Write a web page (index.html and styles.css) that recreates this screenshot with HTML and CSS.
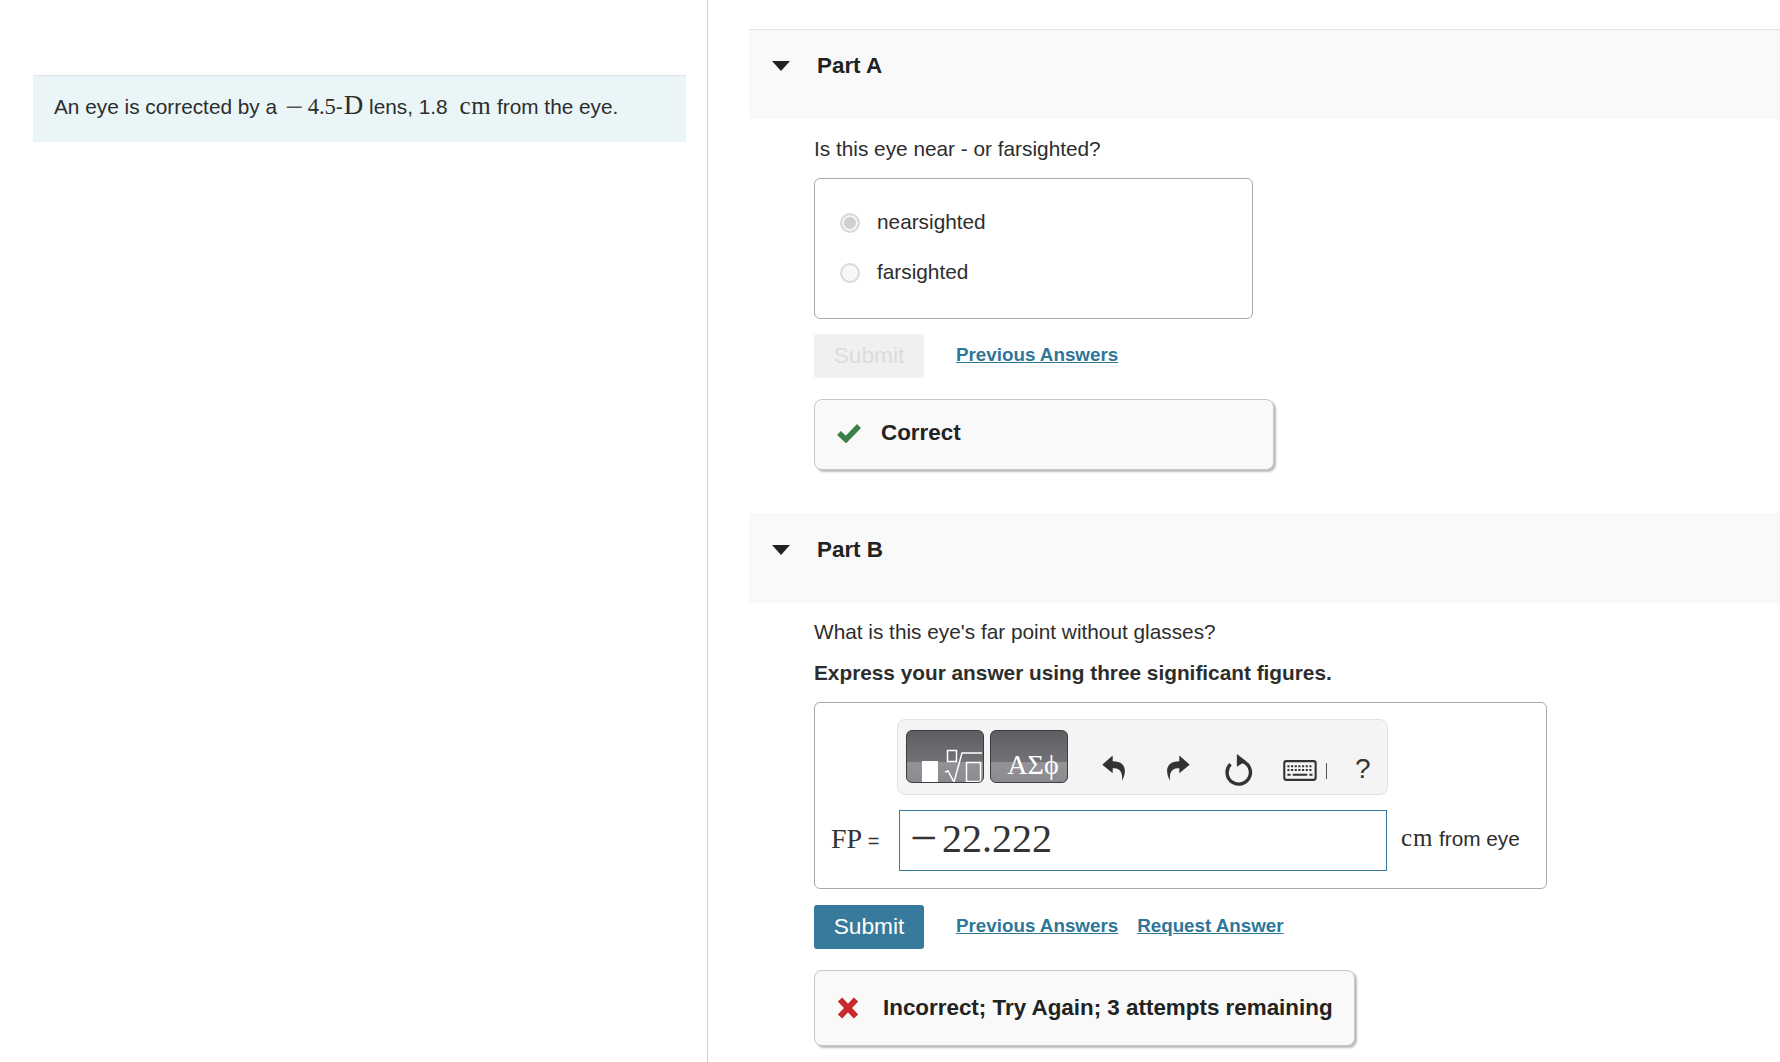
FILE: index.html
```html
<!DOCTYPE html>
<html lang="en">
<head>
<meta charset="utf-8">
<title>Part A and Part B</title>
<link rel="stylesheet" href="styles.css">
</head>
<body>
<div class="page">
  <aside class="left">
    <div class="intro">An eye is corrected by a <span class="math minus">−</span> <span class="math num">4.5</span>-<span class="math big">D</span> lens, 1.8 <span class="math cm">cm</span> from the eye.</div>
  </aside>
  <main class="right">
    <section class="part">
      <header class="part-head"><span class="caret"></span><h2>Part A</h2></header>
      <div class="part-body">
        <p class="q first">Is this eye near - or farsighted?</p>
        <div class="choices">
          <label class="choice"><span class="radio on"></span>nearsighted</label>
          <label class="choice"><span class="radio"></span>farsighted</label>
        </div>
        <div class="actions">
          <button class="btn disabled">Submit</button>
          <a class="link first" href="#">Previous Answers</a>
        </div>
        <div class="feedback ok">
          <svg class="fb-icon" viewBox="0 0 24 20" width="24" height="20"><path d="M2 10 L9 16.500 L22 3" fill="none" stroke="#3a7f47" stroke-width="5.500"/></svg>
          <strong>Correct</strong>
        </div>
      </div>
    </section>
    <section class="part second">
      <header class="part-head"><span class="caret"></span><h2>Part B</h2></header>
      <div class="part-body">
        <p class="q">What is this eye's far point without glasses?</p>
        <p class="q bold">Express your answer using three significant figures.</p>
        <div class="answer">
          <div class="toolbar">
            <div class="tool-btn">
              <svg viewBox="0 0 78 53" width="78" height="53">
                <rect x="16" y="31" width="16" height="22" fill="#fff"/>
                <path d="M39 42 L42 41 L48 52 L56 23 H76" fill="none" stroke="#fff" stroke-width="1.500"/>
                <rect x="41.500" y="20.500" width="9" height="11" fill="none" stroke="#fff" stroke-width="1.500"/>
                <rect x="60.500" y="32.500" width="14" height="19" fill="none" stroke="#fff" stroke-width="1.500"/>
              </svg>
            </div>
            <div class="tool-btn greek">ΑΣϕ</div>
            <svg class="ti undo" viewBox="0 0 26 26" width="30" height="30"><path d="M11 3 L2 11 L11 18.500 V14 C16 14 20 15.500 19 25 C24 16 22 8 11 8 Z" fill="#333"/></svg>
            <svg class="ti redo" viewBox="0 0 26 26" width="30" height="30"><path d="M15 3 L24 11 L15 18.500 V14 C10 14 6 15.500 7 25 C2 16 4 8 15 8 Z" fill="#333"/></svg>
            <svg class="ti reset" viewBox="0 0 30 32" width="32" height="34"><path d="M17 7.500 A11 11 0 1 1 7 10.500" fill="none" stroke="#333" stroke-width="3.200"/><path d="M13 1 L21.500 7.500 L13 13 Z" fill="#333"/></svg>
            <svg class="ti keys" viewBox="0 0 34 22" width="36" height="23"><rect x="1" y="2" width="30" height="18" rx="2" fill="#f4f4f4" stroke="#333" stroke-width="2"/><path d="M4 7 H28 M4 10.500 H28" stroke="#333" stroke-width="2" stroke-dasharray="2 1.500"/><path d="M4 15 H7 M9 15 H23 M25 15 H28" stroke="#333" stroke-width="2"/></svg>
            <span class="bar"></span>
            <span class="help">?</span>
          </div>
          <div class="entry">
            <span class="fp"><span class="math">FP</span> =</span>
            <div class="input"><span class="neg">−</span><span>22.222</span></div>
            <span class="unit"><span class="math">cm</span> from eye</span>
          </div>
        </div>
        <div class="actions tight">
          <button class="btn primary">Submit</button>
          <a class="link first" href="#">Previous Answers</a>
          <a class="link" href="#">Request Answer</a>
        </div>
        <div class="feedback bad">
          <svg class="fb-icon" viewBox="0 0 24 24" width="24" height="24"><path d="M4 3.500 L20 20.500 M20 3.500 L4 20.500" fill="none" stroke="#c9282d" stroke-width="6"/></svg>
          <strong>Incorrect; Try Again; 3 attempts remaining</strong>
        </div>
      </div>
    </section>
  </main>
</div>
</body>
</html>
```
FILE: styles.css
```css
html, body { margin: 0; padding: 0; background: #fff; }
body { font-family: "Liberation Sans", Arial, sans-serif; color: #2d2d2d; font-size: 20.8px; }
.page { display: flex; width: 1780px; height: 1062px; overflow: hidden; }
.left { width: 708px; box-sizing: border-box; padding: 75px 21px 0 33px; border-right: 1px solid #c9d0d6; flex: none; }
.intro { height: 67px; box-sizing: border-box; border-top: 1px solid #dde3e6; background: #e9f5f7; padding-left: 21px; white-space: pre-wrap; line-height: 58px; }
.math { font-family: "Liberation Serif", serif; }
.math.big { font-size: 27px; margin-left: 1px; }
.math.num { font-size: 22.500px; margin-left: -1px; }
.math.cm { font-size: 25px; margin-left: 6px; letter-spacing: .6px; }
.math.minus { color: #555; font-size: 32px; line-height: 20px; margin-left: 2px; vertical-align: -4px; }
.right { flex: 1; padding: 29px 0 0 41px; min-width: 0; }
.part-head { height: 90px; box-sizing: border-box; border-top: 1px solid #e2e2e2; background: #f9f9f9; display: flex; align-items: flex-start; padding: 20px 0 0 23px; }
.part.second { margin-top: 43px; }
.part.second .part-head { border-top-color: #f9f9f9; }
.caret { width: 0; height: 0; border-left: 9px solid transparent; border-right: 9px solid transparent; border-top: 10px solid #222; margin-top: 11px; }
.part-head h2 { margin: 0 0 0 27px; font-size: 22.400px; line-height: 32px; font-weight: 700; color: #222; }
.part-body { padding-left: 65px; }
.q { margin: 0; line-height: 24px; padding-top: 17px; }
.q.first { padding-top: 18px; }
.q.bold { font-weight: 700; }
.choices { width: 439px; height: 141px; box-sizing: border-box; margin-top: 17px; border: 1px solid #aaa; border-radius: 6px; padding: 18px 0 0 25px; }
.choice { display: flex; align-items: center; height: 50px; gap: 17px; }
.radio { width: 20px; height: 20px; box-sizing: border-box; border-radius: 50%; border: 2px solid #d9d9d9; background: #f7f7f7; margin-top: 1px; }
.radio.on { background: #cfcfcf; box-shadow: inset 0 0 0 2px #f7f7f7; }
.actions { display: flex; align-items: center; margin-top: 15px; height: 44px; }
.actions.tight { margin-top: 16px; }
.btn { width: 110px; height: 44px; border: 0; border-radius: 3px; font: inherit; font-size: 22.700px; padding: 0 0 2px; }
.btn.disabled { background: #f0f0f0; color: #dcdcdc; }
.btn.primary { background: #387a9b; color: #fff; }
.link { font-size: 18.800px; font-weight: 700; color: #2f7699; margin-left: 19px; margin-top: -3px; }
.link.first { margin-left: 32px; }
.feedback { display: flex; align-items: center; box-sizing: border-box; background: #f9f9f9; border: 1px solid #c8c8c8; border-radius: 8px; box-shadow: 2px 2px 2px #bbb; font-size: 22.400px; color: #222; }
.feedback strong { font-weight: 700; }
.ok { width: 460px; height: 71px; margin-top: 21px; padding: 0 0 3px 22px; gap: 20px; }
.bad { width: 541px; height: 76px; margin-top: 21px; padding-left: 21px; gap: 23px; }
.answer { width: 733px; height: 187px; box-sizing: border-box; margin-top: 17px; border: 1px solid #aaa; border-radius: 6px; padding: 16px 0 0 16px; }
.toolbar { display: flex; align-items: flex-start; width: 491px; height: 76px; box-sizing: border-box; margin-left: 66px; background: #f4f4f4; border: 1px solid #e2e2e2; border-radius: 8px; padding: 10px 0 0 8px; }
.tool-btn { width: 78px; height: 53px; box-sizing: border-box; margin-right: 6px; border: 1px solid #3d3d40; border-radius: 6px; overflow: hidden; background: linear-gradient(#5e5e62 0, #727276 60%, #929297 62%, #8a8a8f 100%); color: #fff; flex: none; }
.tool-btn svg { display: block; margin: -1px; }
.greek { font-family: "Liberation Serif", serif; font-size: 28px; text-align: center; line-height: 68px; padding-left: 8px; }
.ti { flex: none; }
.undo { margin: 22px 0 0 26px; }
.redo { margin: 22px 0 0 32px; }
.reset { margin: 23px 0 0 31px; }
.keys { margin: 29px 0 0 28px; }
.bar { width: 1px; height: 16px; background: #555; margin: 33px 0 0 7px; }
.help { font-size: 28px; line-height: 30px; color: #333; margin: 24px 0 0 28px; }
.entry { display: flex; align-items: center; height: 60px; margin-top: 15px; }
.fp { width: 68px; font-size: 20px; color: #333; white-space: nowrap; flex: none; margin-top: -2px; }
.fp .math { font-size: 28px; }
.input { width: 488px; height: 61px; box-sizing: border-box; border: 1px solid #337a9b; flex: none; font-family: "Liberation Serif", serif; font-size: 40px; color: #333; padding: 0 0 4px 10px; display: flex; align-items: center; }
.neg { font-size: 48px; font-weight: 400; margin-right: 5px; line-height: 40px; }
.unit { margin: -4px 0 0 14px; white-space: nowrap; }
.unit .math { font-size: 25px; letter-spacing: .8px; }
```
